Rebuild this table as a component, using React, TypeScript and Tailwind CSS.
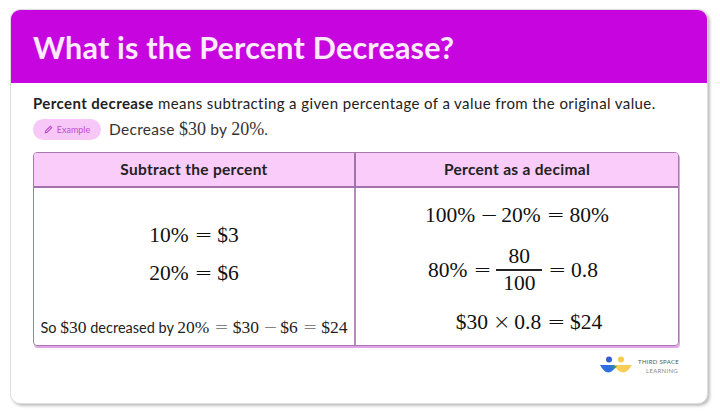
import React from "react";

const SANS = "font-['Lato','Open_Sans',sans-serif]";
const MATH = "font-['Liberation_Serif','DejaVu_Serif',serif]";
const OPS = "font-['DejaVu_Sans',sans-serif] font-light";

function M({ children, className = "" }: { children: React.ReactNode; className?: string }) {
  return <span className={`${MATH} whitespace-nowrap ${className}`}>{children}</span>;
}

// relation / binary operator with KaTeX-like spacing
function Eq() {
  return <span className={`${OPS} inline-block w-[0.78em] mx-[0.28em] text-center`}>=</span>;
}
function Op({ sym }: { sym: string }) {
  return <span className={`${OPS} inline-block w-[0.78em] mx-[0.22em] text-center`}>{sym}</span>;
}

function Logo() {
  return (
    <div className="flex items-center gap-[5px]">
      <svg width="34" height="22" viewBox="0 0 34 22">
        <circle cx="10" cy="4.5" r="3" fill="#2f5fd0" />
        <circle cx="22" cy="4.5" r="3" fill="#f5cc4a" />
        <path d="M1 10 Q9 25 18 10 Z" fill="#2f6fe0" />
        <path d="M15 10 Q24 25 33 10 Z" fill="#f5c842" opacity="0.9" />
        <path d="M12 11 Q15 17 18 11 Z" fill="#2a9a7a" opacity="0.8" />
      </svg>
      <div className={`${SANS} flex flex-col leading-[9px] text-[6px] tracking-[0.3px] text-[#8a8a8a]`}>
        <span className="text-[#555]">THIRD SPACE</span>
        <span className="pl-[8px]">LEARNING</span>
      </div>
    </div>
  );
}

export default function App() {
  return (
    <div className="w-[720px] h-[416px] bg-white pt-[9px] pl-[10px]">
      <div className="w-[698px] h-[395px] rounded-[10px] border border-[#dcdcdc] shadow-[2px_2px_3px_rgba(0,0,0,0.25)] overflow-hidden flex flex-col bg-white">
        {/* Title bar */}
        <div className="h-[73px] bg-[#c705df] flex items-center px-[22px]">
          <h1 className={`${SANS} text-[30.5px] font-bold text-[#fdeafd] tracking-[0.2px] pt-[2px]`}>
            What is the Percent Decrease?
          </h1>
        </div>

        <div className="flex flex-col px-[22px] pt-[10px]">
          <p className={`${SANS} text-[15px] leading-[20px] tracking-[0.4px] text-[#222] whitespace-nowrap`}>
            <span className="font-bold">Percent decrease</span> means subtracting a given percentage of a value from the original value.
          </p>

          <div className="flex items-center gap-[8px] mt-[6px] h-[21px]">
            <span className={`${SANS} flex items-center gap-[4px] h-[21px] w-[68px] justify-center rounded-full bg-[#f7c8f7] text-[#c24ad2] text-[9px]`}>
              <svg width="9" height="9" viewBox="0 0 10 10" fill="none" stroke="#c24ad2" strokeWidth="1.2">
                <path d="M1.5 8.5 L2 6.5 L7 1.5 L8.5 3 L3.5 8 Z" />
              </svg>
              Example
            </span>
            <span className={`${SANS} text-[15.5px] tracking-[0.3px] text-[#333]`}>
              Decrease <M className="text-[18px] tracking-normal">$30</M> by <M className="text-[18px] tracking-normal">20%</M>.
            </span>
          </div>

          {/* Table */}
          <div className="mt-[12px] w-[646px] rounded-[4px] border border-[#a678ab] shadow-[1px_2px_0_#e3a3ea] overflow-hidden">
            <div className="grid grid-cols-[322px_1fr] h-[35px] bg-[#f9ccfa] border-b-2 border-[#a471aa]">
              <div className={`${SANS} flex items-center justify-center font-bold text-[15.5px] tracking-[0.3px] text-[#222] border-r-2 border-[#a471aa]`}>
                Subtract the percent
              </div>
              <div className={`${SANS} flex items-center justify-center font-bold text-[15.5px] tracking-[0.3px] text-[#222]`}>
                Percent as a decimal
              </div>
            </div>
            <div className="grid grid-cols-[322px_1fr] h-[157px]">
              <div className="flex flex-col items-center border-r-2 border-[#b98abd] text-[#111]">
                <M className="text-[21.5px] leading-[24px] mt-[35px]">10%<Eq />$3</M>
                <M className="text-[21.5px] leading-[24px] mt-[14px]">20%<Eq />$6</M>
                <div className={`${SANS} text-[14.5px] leading-[18px] mt-[33px] whitespace-nowrap text-[#222]`}>
                  So <M className="text-[17.5px]">$30</M> decreased by <M className="text-[17.5px]">20%<Eq />$30<Op sym="−" />$6<Eq />$24</M>
                </div>
              </div>
              <div className="flex flex-col items-center text-[#111]">
                <M className="text-[21.5px] leading-[24px] mt-[15px]">100%<Op sym="−" />20%<Eq />80%</M>
                <div className={`${MATH} flex items-center mt-[17px] mr-[8px] text-[21.5px]`}>
                  <span className="leading-[24px]">80%<Eq /></span>
                  <div className="flex flex-col items-center">
                    <span className="leading-[25px]">80</span>
                    <div className="w-[46px] h-[1.5px] bg-[#222]" />
                    <span className="leading-[25px]">100</span>
                  </div>
                  <span className="leading-[24px]"><Eq />0.8</span>
                </div>
                <M className="text-[21.5px] leading-[24px] mt-[14px] ml-[24px]">$30<Op sym="×" />0.8<Eq />$24</M>
              </div>
            </div>
          </div>

          <div className="flex justify-end pr-[6px] mt-[9px]">
            <Logo />
          </div>
        </div>
      </div>
    </div>
  );
}
